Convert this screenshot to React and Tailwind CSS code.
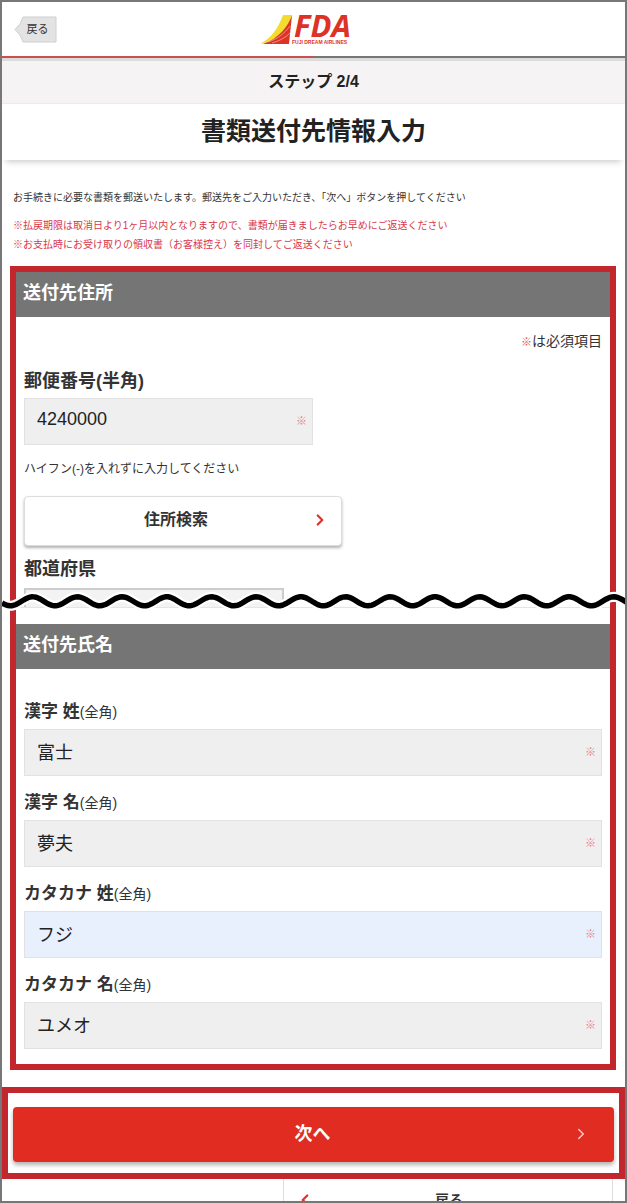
import React, { useState } from 'react';
import { ChevronLeft, ChevronRight } from 'lucide-react';

const nameFields = [
  { id: 'kanji-sei', label: '漢字 姓', value: '富士' },
  { id: 'kanji-mei', label: '漢字 名', value: '夢夫' },
  { id: 'kana-sei', label: 'カタカナ 姓', value: 'フジ', filled: true },
  { id: 'kana-mei', label: 'カタカナ 名', value: 'ユメオ' },
];

const Logo = () => (
  <svg viewBox="0 0 94 34" className="h-[34px] w-[94px] overflow-visible" role="img" aria-label="FDA FUJI DREAM AIRLINES">
    <path d="M0 32 C11 26 18 17 23 3 L32 3 L29 14 C22 22 13 29 0 32Z" fill="#f2dc2e" />
    <path d="M32 3 C28 15 19 26 3 32 L29 32Z" fill="#dd3327" />
    <path d="M30 14 C24 22 17 27 8 30 M30 21 C25 26 19 29 12 31" fill="none" stroke="#f6b6a0" strokeWidth="0.7" />
    <text x="34" y="25" fill="#dd3327" className="font-['Open_Sans',sans-serif] text-[31px] font-bold italic">FDA</text>
    <text x="32" y="32" fill="#dd3327" className="font-['Liberation_Sans',sans-serif] text-[5px] font-bold">FUJI DREAM AIRLINES</text>
  </svg>
);

// wavy cut line between the two halves of the form
const WAVE_PERIOD = 44.7;
const wavePath = Array.from({ length: 316 }, (_, i) => {
  const x = i * 2;
  const y = 12.3 - 4.5 * Math.cos((2 * Math.PI * (x - 30.7)) / WAVE_PERIOD);
  return `${i === 0 ? 'M' : 'L'}${x} ${y.toFixed(2)}`;
}).join(' ');

const WaveCut = () => (
  <svg
    viewBox="0 0 623 24"
    preserveAspectRatio="none"
    className="relative -mt-[19px] -mb-[5px] block h-6 w-full"
    aria-hidden="true"
  >
    <path d={wavePath} fill="none" stroke="#fff" strokeWidth="10" />
    <path d={wavePath} fill="none" stroke="#000" strokeWidth="5.5" />
  </svg>
);

const SectionTitle = ({ children }) => (
  <h2 className="flex h-[45px] items-center bg-[#757575] pb-1 pl-[7px] text-lg leading-6 font-bold text-white">
    {children}
  </h2>
);

const RequiredInput = ({ id, defaultValue, filled }) => {
  const [value, setValue] = useState(defaultValue);

  return (
    <div className="relative">
      <input
        id={id}
        type="text"
        required
        value={value}
        onChange={(e) => setValue(e.target.value)}
        className={`block h-[47px] w-full border border-[#e2e2e2] pr-8 pb-1 pl-3 text-lg text-[#222] outline-none ${
          filled ? 'bg-[#e8f0fe]' : 'bg-[#efefef]'
        }`}
      />
      <span className="pointer-events-none absolute inset-y-0 right-[6px] flex items-center text-[11px] text-[#e8808a]">※</span>
    </div>
  );
};

const App = () => {
  return (
    <div className="border-2 border-[#777] bg-white font-['Liberation_Sans','Noto_Sans_CJK_JP',sans-serif] text-[#333]">
      <header className="grid h-[54px] grid-cols-[1fr_auto_1fr] items-center pr-[14px]">
        <button type="button" className="relative ml-3 h-[27px] w-[43px] pl-1 text-[11px] leading-none">
          <svg viewBox="0 0 43 27" className="absolute inset-0 h-full w-full" aria-hidden="true">
            <path d="M9 1 H42 V26 H9 L6 19 L1 13.5 L6 8Z" fill="#e3e3e3" stroke="#cfcfcf" />
          </svg>
          <span className="relative">戻る</span>
        </button>
        <Logo />
      </header>
      <div className="h-[2px] bg-[#777]">
        <div className="h-full w-1/2 bg-[#c9504e]" />
      </div>
      <div className="h-[3px] bg-[#dcdcdc]" />
      <p className="flex h-[43px] items-center justify-center border-b border-[#ececec] bg-[#f5f3f4] font-bold text-[#222]">
        ステップ 2/4
      </p>
      <h1 className="flex h-14 items-center justify-center text-[25px] font-bold text-[#222] shadow-[0_6px_6px_-4px_rgba(0,0,0,0.2)]">
        書類送付先情報入力
      </h1>

      <div className="mt-7 ml-[11px] text-[10px]">
        <p className="leading-5">
          お手続きに必要な書類を郵送いたします。郵送先をご入力いただき、「次へ」ボタンを押してください
        </p>
        <p className="mt-2 leading-[19px] text-[#d8384c]">
          ※払戻期限は取消日より1ヶ月以内となりますので、書類が届きましたらお早めにご返送ください
          <br />
          ※お支払時にお受け取りの領収書（お客様控え）を同封してご返送ください
        </p>
      </div>

      <form onSubmit={(e) => e.preventDefault()}>
        <section className="mt-3 mr-[9px] ml-2 border-x-6 border-t-6 border-[#c1272d]">
          <SectionTitle>送付先住所</SectionTitle>
          <div className="px-2">
            <p className="mt-3 text-right text-sm leading-6">
              <span className="text-[11px] text-[#e05560]">※</span>は必須項目
            </p>
            <label htmlFor="zip" className="mt-[15px] mb-[5px] block text-lg leading-6 font-bold">
              郵便番号(半角)
            </label>
            <div className="w-1/2">
              <RequiredInput id="zip" defaultValue="4240000" />
            </div>
            <p className="mt-[14px] text-xs leading-5">ハイフン(-)を入れずに入力してください</p>
            <button
              type="button"
              className="mt-[17px] flex h-[50px] w-[55%] items-center rounded-sm border border-[#ddd] bg-white pr-3 pb-[2px] pl-4 font-bold shadow-[0_2px_3px_rgba(0,0,0,0.3)]"
            >
              <span className="flex-1 text-center">住所検索</span>
              <ChevronRight className="h-[18px] w-[18px] text-[#e2332b]" strokeWidth={3} />
            </button>
            <label htmlFor="prefecture" className="mt-[11px] mb-[7px] block text-lg leading-6 font-bold">
              都道府県
            </label>
          </div>
          <div className="h-5 overflow-hidden border-b border-[#e5e5e5] px-2">
            <select id="prefecture" className="h-[47px] w-[45%] appearance-none border-2 border-[#ccc] bg-[#f3f3f3]">
              <option value=""></option>
            </select>
          </div>
        </section>

        <WaveCut />

        <section className="mr-[9px] ml-2 border-x-6 border-b-6 border-[#c1272d] pt-4">
          <SectionTitle>送付先氏名</SectionTitle>
          <div className="px-2 pt-4 pb-[15px]">
            {nameFields.map((field) => (
              <div key={field.id} className="pt-[15px]">
                <label htmlFor={field.id} className="mb-[5px] block text-[17px] leading-6 font-bold">
                  {field.label}
                  <span className="text-sm font-normal">(全角)</span>
                </label>
                <RequiredInput id={field.id} defaultValue={field.value} filled={field.filled} />
              </div>
            ))}
          </div>
        </section>

        <div className="mt-[17px] border-6 border-[#c1272d] px-[5px] pt-[14px] pb-[11px]">
          <button
            type="submit"
            className="flex h-[55px] w-full items-center rounded-sm bg-[#e12d21] pr-6 pb-[2px] pl-10 text-lg font-bold text-white shadow-[0_3px_4px_rgba(0,0,0,0.3)]"
          >
            <span className="flex-1 text-center">次へ</span>
            <ChevronRight className="h-[18px] w-[18px] text-[#ffc9c4]" />
          </button>
        </div>

        <div className="h-[22px] overflow-hidden pr-3">
          <button type="button" className="ml-auto flex h-[42px] w-[54%] items-center border-x border-[#ddd] pr-7 pl-3 text-sm font-bold">
            <ChevronLeft className="h-[18px] w-[18px] text-[#e2332b]" strokeWidth={3} />
            <span className="flex-1 text-center">戻る</span>
          </button>
        </div>
      </form>
    </div>
  );
};

export default App;
